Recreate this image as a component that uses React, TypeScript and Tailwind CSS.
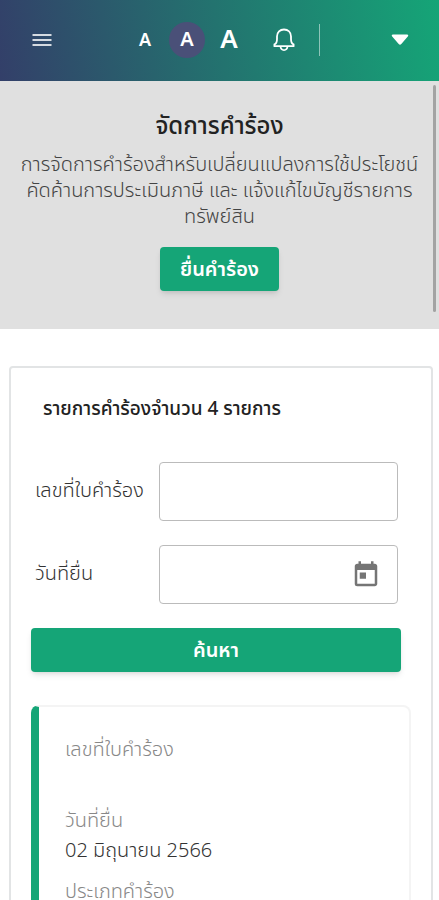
import { MdToday } from "react-icons/md";

type Request = {
  id: number;
  fields: { label: string; value: string }[];
};

const requests: Request[] = [
  {
    id: 1,
    fields: [
      { label: "เลขที่ใบคำร้อง", value: "" },
      { label: "วันที่ยื่น", value: "02 มิถุนายน 2566" },
      { label: "ประเภทคำร้อง", value: "" },
    ],
  },
];

const requestTotal = 4;

function MenuIcon() {
  return (
    <svg
      viewBox="0 0 20 14"
      className="h-3.5 w-5"
      stroke="currentColor"
      strokeWidth="2"
      aria-hidden="true"
    >
      <path d="M.5 2h19M.5 7h19M.5 12h19" />
    </svg>
  );
}

function BellIcon() {
  return (
    <svg
      viewBox="0 0 22 24"
      className="h-6 w-[22px]"
      fill="none"
      stroke="currentColor"
      strokeWidth="1.8"
      strokeLinejoin="round"
      aria-hidden="true"
    >
      <path d="M4 11V8.500C4 4.300 7 1.500 11 1.500s7 2.800 7 7V11c0 3 .4 4.700 2.600 5.400v1.800H1.400v-1.800C3.600 15.700 4 14 4 11Z" />
      <path d="M7.500 18.500c.3 2.400 1.600 3.600 3.500 3.600s3.200-1.200 3.500-3.600" />
    </svg>
  );
}

function Header() {
  return (
    <header className="flex h-[81px] shrink-0 items-center bg-linear-[80deg] from-[#333f69] via-[#23736f] to-[#15a577] pr-[30px] pb-0.5 pl-8 text-white">
      <button type="button" aria-label="เมนู" className="text-white/80">
        <MenuIcon />
      </button>

      {/* Text size switcher */}
      <div className="ml-auto flex items-center">
        <button type="button" className="w-10 pr-2 pb-0.5 text-lg font-semibold">
          A
        </button>
        <button
          type="button"
          aria-pressed="true"
          className="size-9 rounded-full bg-[#4a5078] pb-0.5 text-xl font-semibold"
        >
          A
        </button>
        <button type="button" className="w-12 pb-0.5 text-[26px] font-semibold">
          A
        </button>
      </div>

      <button type="button" aria-label="การแจ้งเตือน" className="ml-5">
        <BellIcon />
      </button>
      <div className="ml-6 h-8 w-px bg-white/50" />
      <button type="button" aria-label="บัญชีผู้ใช้" className="ml-[71px]">
        <svg viewBox="0 0 18 12" className="h-3 w-[18px]" fill="currentColor" aria-hidden="true">
          <path d="M2 .5h14c1.300 0 1.600 1 .8 1.900l-6.500 7.700c-.8.900-1.800.9-2.600 0L1.200 2.400C.4 1.500.7.5 2 .5Z" />
        </svg>
      </button>
    </header>
  );
}

function Intro() {
  return (
    <section className="bg-[#e0e0e0] px-4 pt-7 pb-[38px] text-center">
      <h1 className="text-2xl leading-8 font-medium text-[#222222]">จัดการคำร้อง</h1>
      <p className="mt-2.5 text-xl leading-[26px] font-light text-[#444444]">
        การจัดการคำร้องสำหรับเปลี่ยนแปลงการใช้ประโยชน์ คัดค้านการประเมินภาษี และ
        แจ้งแก้ไขบัญชีรายการทรัพย์สิน
      </p>
      <button
        type="button"
        className="mt-[18px] h-11 rounded bg-[#15a577] px-5 text-xl font-semibold text-white shadow-md"
      >
        ยื่นคำร้อง
      </button>
    </section>
  );
}

function SearchForm() {
  return (
    <form className="flex flex-col gap-6">
      <div className="flex items-center pr-[3px] pl-1">
        <label htmlFor="request-no" className="w-31 pb-1 text-xl font-light text-[#333333]">
          เลขที่ใบคำร้อง
        </label>
        <input
          id="request-no"
          type="text"
          className="h-[59px] min-w-0 flex-1 rounded border border-[#bbbbbb] px-3 text-xl"
        />
      </div>
      <div className="flex items-center pr-[3px] pl-1">
        <label htmlFor="request-date" className="w-31 pb-1 text-xl font-light text-[#333333]">
          วันที่ยื่น
        </label>
        <div className="flex h-[59px] min-w-0 flex-1 items-center rounded border border-[#bbbbbb] pr-4">
          <input id="request-date" type="text" className="h-full min-w-0 flex-1 px-3 text-xl" />
          <button type="button" aria-label="เลือกวันที่" className="text-[#757575]">
            <MdToday className="size-[30px]" />
          </button>
        </div>
      </div>
      <button
        type="submit"
        className="h-11 rounded bg-[#15a577] text-xl font-semibold text-white shadow-md"
      >
        ค้นหา
      </button>
    </form>
  );
}

function RequestCard({ fields }: Request) {
  return (
    <article className="rounded-lg border-2 border-l-8 border-[#f4f4f4] border-l-[#15a577] px-[26px] pt-7 pb-8">
      <dl className="flex flex-col gap-3">
        {fields.map((field) => (
          <div key={field.label} className="text-xl font-light">
            <dt className="leading-7 text-[#888888]">{field.label}</dt>
            <dd className="min-h-[31px] leading-[31px] text-[#333333]">{field.value}</dd>
          </div>
        ))}
      </dl>
    </article>
  );
}

export default function App() {
  return (
    <div className="flex h-screen flex-col bg-white font-['Noto_Sans','Noto_Sans_Thai',sans-serif]">
      <Header />
      <main className="relative min-h-0 flex-1 overflow-y-auto [scrollbar-width:none]">
        {/* Scroll thumb */}
        <div className="absolute top-1 right-[3px] h-[227px] w-[3px] rounded-full bg-[#a3a3a3]" />
        <Intro />
        <section className="mt-[37px] mr-[6px] mb-9 ml-[9px] rounded-sm border-2 border-[#e2e4e5] pt-[26px] pr-5 pb-8 pl-5">
          <h2 className="pl-3 text-[19px] leading-7 font-medium text-[#222222]">
            รายการคำร้องจำนวน {requestTotal} รายการ
          </h2>
          <div className="mt-10 pr-2.5">
            <SearchForm />
          </div>
          <div className="mt-[33px]">
            {requests.map((request) => (
              <RequestCard key={request.id} {...request} />
            ))}
          </div>
        </section>
      </main>
    </div>
  );
}
